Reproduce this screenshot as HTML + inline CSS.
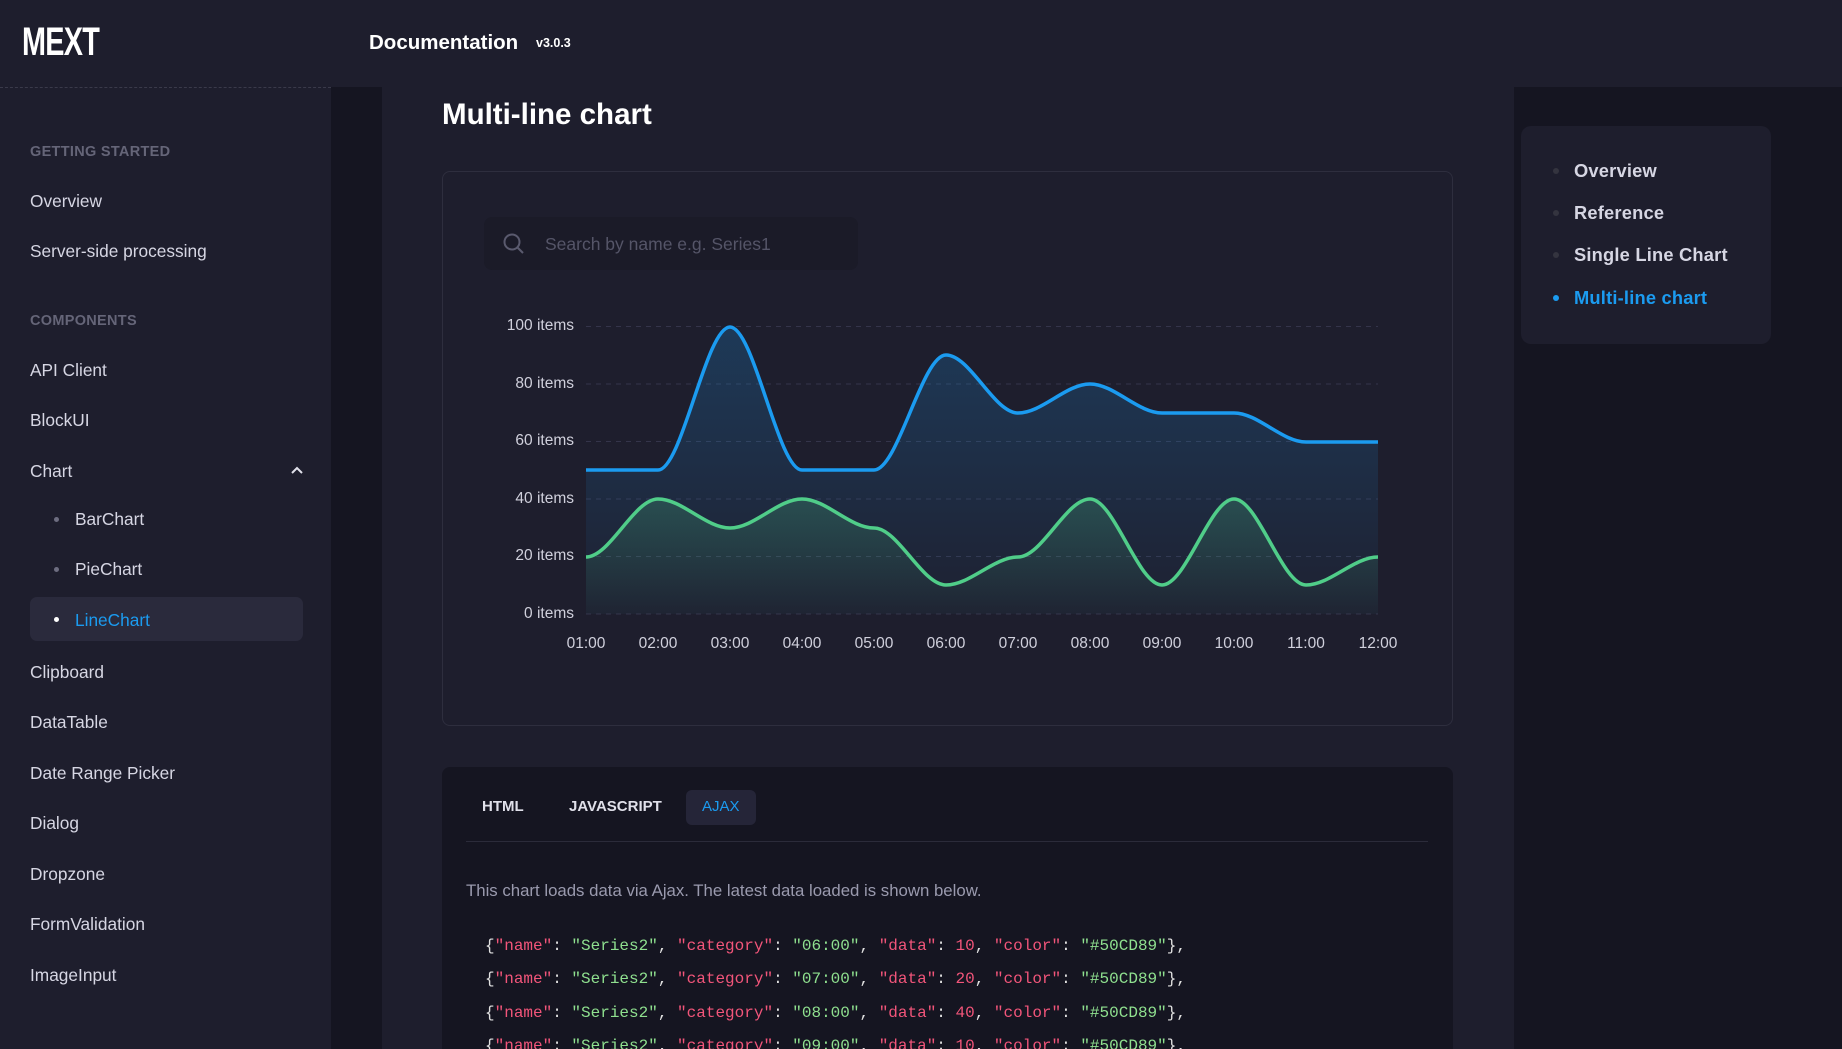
<!DOCTYPE html>
<html><head><meta charset="utf-8"><style>
*{margin:0;padding:0;box-sizing:border-box}
html,body{width:1842px;height:1049px;overflow:hidden}
body{background:#1e1e2d;font-family:"Liberation Sans",sans-serif;color:#cdcdde;position:relative}
.a{position:absolute;white-space:nowrap}
.nav{font-size:17.3px;color:#d6d6e3;left:30px}
.sec{font-size:14.5px;font-weight:bold;color:#656578;left:30px;letter-spacing:.3px}
.sub{font-size:17.3px;color:#d6d6e3;left:75px}
.dot{position:absolute;width:5px;height:5px;border-radius:50%;background:#6d6d80;left:54px}
.toc{font-size:18.3px;font-weight:bold;color:#d6d6e3;left:1574px;letter-spacing:.2px}
.td{position:absolute;width:6px;height:6px;border-radius:50%;background:#34343f;left:1553px}
.code{font-family:"Liberation Mono",monospace;font-size:16px;left:485px;color:#e0e0e0}
.k{color:#f2557a}.s{color:#8fe08f}.n{color:#f2557a}
</style></head><body>
<div class="a" style="left:0;top:0;width:1842px;height:87px;background:#1e1e2d"></div>
<div class="a" style="left:0;top:87px;width:331px;border-top:1px dashed #3a3a4a"></div>
<div class="a" style="left:22px;top:20px;font-size:40px;font-weight:bold;color:#fff;transform:scaleX(.72);transform-origin:left;letter-spacing:-1px">MEXT</div>
<div class="a" style="left:369px;top:31px;font-size:20.5px;font-weight:bold;color:#fff">Documentation</div>
<div class="a" style="left:536px;top:36px;font-size:12.5px;font-weight:bold;color:#fff">v3.0.3</div>
<div class="a" style="left:331px;top:87px;width:51px;height:962px;background:#151521"></div>
<div class="a" style="left:1514px;top:87px;width:328px;height:962px;background:#151521"></div>
<div class="a sec" style="top:144px">GETTING STARTED</div>
<div class="a nav" style="top:191px">Overview</div>
<div class="a nav" style="top:241px">Server-side processing</div>
<div class="a sec" style="top:313px">COMPONENTS</div>
<div class="a nav" style="top:360px">API Client</div>
<div class="a nav" style="top:410px">BlockUI</div>
<div class="a nav" style="top:461px">Chart</div>
<svg class="a" style="left:290px;top:465px" width="14" height="10"><path d="M2 8 L7 3 L12 8" fill="none" stroke="#e0e0ea" stroke-width="2"/></svg>
<div class="dot" style="top:517px"></div><div class="a sub" style="top:509px">BarChart</div>
<div class="dot" style="top:567px"></div><div class="a sub" style="top:559px">PieChart</div>
<div class="a" style="left:30px;top:597px;width:273px;height:44px;border-radius:7px;background:#2a2a3c"></div>
<div class="dot" style="top:617px;background:#fff"></div><div class="a sub" style="top:610px;color:#1b9bf0">LineChart</div>
<div class="a nav" style="top:662px">Clipboard</div>
<div class="a nav" style="top:712px">DataTable</div>
<div class="a nav" style="top:763px">Date Range Picker</div>
<div class="a nav" style="top:813px">Dialog</div>
<div class="a nav" style="top:864px">Dropzone</div>
<div class="a nav" style="top:914px">FormValidation</div>
<div class="a nav" style="top:965px">ImageInput</div>
<div class="a" style="left:442px;top:98px;font-size:29.5px;font-weight:bold;color:#fff">Multi-line chart</div>
<div class="a" style="left:442px;top:171px;width:1011px;height:555px;border:1px solid #2e2e3e;border-radius:8px;background:#1e1e2d"></div>
<div class="a" style="left:484px;top:217px;width:374px;height:53px;border-radius:8px;background:#1b1b28"></div>
<svg class="a" style="left:502px;top:232px" width="24" height="24"><circle cx="10" cy="10" r="7.5" fill="none" stroke="#5a5a6e" stroke-width="2"/><path d="M15.5 15.5 L21 21" stroke="#5a5a6e" stroke-width="2"/></svg>
<div class="a" style="left:545px;top:234px;font-size:17.5px;color:#555568">Search by name e.g. Series1</div>
<svg class="a" style="left:0;top:0" width="1842" height="1049">
<defs>
<linearGradient id="gb" x1="0" y1="0" x2="0" y2="1"><stop offset="0" stop-color="#1b9bf0" stop-opacity=".22"/><stop offset="1" stop-color="#1b9bf0" stop-opacity=".02"/></linearGradient>
<linearGradient id="gg" x1="0" y1="0" x2="0" y2="1"><stop offset="0" stop-color="#50cd89" stop-opacity=".22"/><stop offset="1" stop-color="#50cd89" stop-opacity=".02"/></linearGradient>
</defs>
<g stroke="#34344a" stroke-dasharray="5 5" stroke-width="1">
<path d="M586 326.5H1378M586 384H1378M586 441.5H1378M586 499H1378M586 556.5H1378M586 614H1378"/>
</g>
<path d="M586 470 C610 470 634 470 658 470 C682 470 706 327 730 327 C754 327 778 470 802 470 C826 470 850 470 874 470 C898 470 922 355 946 355 C970 355 994 413 1018 413 C1042 413 1066 384 1090 384 C1114 384 1138 413 1162 413 C1186 413 1210 413 1234 413 C1258 413 1282 442 1306 442 C1330 442 1354 442 1378 442 L1378 614 L586 614Z" fill="url(#gb)"/>
<path d="M586 557 C610 557 634 499 658 499 C682 499 706 528 730 528 C754 528 778 499 802 499 C826 499 850 528 874 528 C898 528 922 585 946 585 C970 585 994 557 1018 557 C1042 557 1066 499 1090 499 C1114 499 1138 585 1162 585 C1186 585 1210 499 1234 499 C1258 499 1282 585 1306 585 C1330 585 1354 557 1378 557 L1378 614 L586 614Z" fill="url(#gg)"/>
<path d="M586 470 C610 470 634 470 658 470 C682 470 706 327 730 327 C754 327 778 470 802 470 C826 470 850 470 874 470 C898 470 922 355 946 355 C970 355 994 413 1018 413 C1042 413 1066 384 1090 384 C1114 384 1138 413 1162 413 C1186 413 1210 413 1234 413 C1258 413 1282 442 1306 442 C1330 442 1354 442 1378 442" fill="none" stroke="#1b9bf0" stroke-width="3.5"/>
<path d="M586 557 C610 557 634 499 658 499 C682 499 706 528 730 528 C754 528 778 499 802 499 C826 499 850 528 874 528 C898 528 922 585 946 585 C970 585 994 557 1018 557 C1042 557 1066 499 1090 499 C1114 499 1138 585 1162 585 C1186 585 1210 499 1234 499 C1258 499 1282 585 1306 585 C1330 585 1354 557 1378 557" fill="none" stroke="#50cd89" stroke-width="3.5"/>
<g font-family="Liberation Sans" font-size="15.5" fill="#d0d0dc" text-anchor="end">
<text x="574" y="330">100 items</text><text x="574" y="388">80 items</text><text x="574" y="445">60 items</text><text x="574" y="503">40 items</text><text x="574" y="560">20 items</text><text x="574" y="618">0 items</text>
</g>
<g font-family="Liberation Sans" font-size="15.5" fill="#d0d0dc" text-anchor="middle">
<text x="586" y="648">01:00</text><text x="658" y="648">02:00</text><text x="730" y="648">03:00</text><text x="802" y="648">04:00</text><text x="874" y="648">05:00</text><text x="946" y="648">06:00</text><text x="1018" y="648">07:00</text><text x="1090" y="648">08:00</text><text x="1162" y="648">09:00</text><text x="1234" y="648">10:00</text><text x="1306" y="648">11:00</text><text x="1378" y="648">12:00</text>
</g>
</svg>
<div class="a" style="left:442px;top:767px;width:1011px;height:282px;border-radius:8px 8px 0 0;background:#151521"></div>
<div class="a" style="left:482px;top:798px;font-size:15px;font-weight:bold;color:#e0e0ea">HTML</div>
<div class="a" style="left:569px;top:798px;font-size:15px;font-weight:bold;color:#e0e0ea">JAVASCRIPT</div>
<div class="a" style="left:686px;top:790px;width:70px;height:35px;border-radius:6px;background:#252538"></div>
<div class="a" style="left:702px;top:798px;font-size:15px;color:#1b9bf0">AJAX</div>
<div class="a" style="left:466px;top:841px;width:962px;border-top:1px solid #2b2b3a"></div>
<div class="a" style="left:466px;top:881px;font-size:16.8px;color:#9a9aae">This chart loads data via Ajax. The latest data loaded is shown below.</div>
<div class="a code" style="top:937px">{<span class="k">"name"</span>: <span class="s">"Series2"</span>, <span class="k">"category"</span>: <span class="s">"06:00"</span>, <span class="k">"data"</span>: <span class="n">10</span>, <span class="k">"color"</span>: <span class="s">"#50CD89"</span>},</div>
<div class="a code" style="top:970px">{<span class="k">"name"</span>: <span class="s">"Series2"</span>, <span class="k">"category"</span>: <span class="s">"07:00"</span>, <span class="k">"data"</span>: <span class="n">20</span>, <span class="k">"color"</span>: <span class="s">"#50CD89"</span>},</div>
<div class="a code" style="top:1004px">{<span class="k">"name"</span>: <span class="s">"Series2"</span>, <span class="k">"category"</span>: <span class="s">"08:00"</span>, <span class="k">"data"</span>: <span class="n">40</span>, <span class="k">"color"</span>: <span class="s">"#50CD89"</span>},</div>
<div class="a code" style="top:1037px">{<span class="k">"name"</span>: <span class="s">"Series2"</span>, <span class="k">"category"</span>: <span class="s">"09:00"</span>, <span class="k">"data"</span>: <span class="n">10</span>, <span class="k">"color"</span>: <span class="s">"#50CD89"</span>},</div>
<div class="a" style="left:1521px;top:126px;width:250px;height:218px;border-radius:10px;background:#1e1e2d"></div>
<div class="td" style="top:168px"></div><div class="a toc" style="top:160px">Overview</div>
<div class="td" style="top:210px"></div><div class="a toc" style="top:202px">Reference</div>
<div class="td" style="top:252px"></div><div class="a toc" style="top:244px">Single Line Chart</div>
<div class="td" style="top:295px;background:#1b9bf0"></div><div class="a toc" style="top:287px;color:#1b9bf0">Multi-line chart</div>
</body></html>
